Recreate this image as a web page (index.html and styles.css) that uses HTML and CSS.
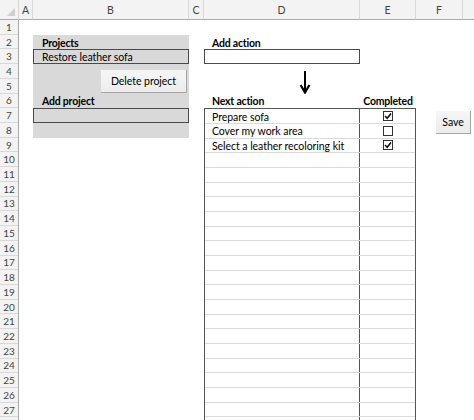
FILE: index.html
```html
<!DOCTYPE html>
<html>
<head>
<meta charset="utf-8">
<link rel="stylesheet" href="styles.css">
</head>
<body>
<div class="sheet">
  <div class="corner"><span class="tri"></span></div>
  <div class="ch">A</div>
  <div class="ch">B</div>
  <div class="ch">C</div>
  <div class="ch">D</div>
  <div class="ch">E</div>
  <div class="ch">F</div>
  <div class="ch ch-last"></div>

  <div class="rowhdrs">
    <div class="rh">1</div><div class="rh">2</div><div class="rh">3</div><div class="rh">4</div>
    <div class="rh">5</div><div class="rh">6</div><div class="rh">7</div><div class="rh">8</div>
    <div class="rh">9</div><div class="rh">10</div><div class="rh">11</div><div class="rh">12</div>
    <div class="rh">13</div><div class="rh">14</div><div class="rh">15</div><div class="rh">16</div>
    <div class="rh">17</div><div class="rh">18</div><div class="rh">19</div><div class="rh">20</div>
    <div class="rh">21</div><div class="rh">22</div><div class="rh">23</div><div class="rh">24</div>
    <div class="rh">25</div><div class="rh">26</div><div class="rh">27</div><div class="rh"></div>
  </div>

  <div class="block"></div>
  <div class="label lbl-projects">Projects</div>
  <div class="field field-gray fld-project">Restore leather sofa</div>
  <div class="btn btn-delete">Delete project</div>
  <div class="label lbl-addproject">Add project</div>
  <div class="field field-gray fld-addproject"></div>

  <div class="label lbl-addaction">Add action</div>
  <div class="field field-white fld-addaction"></div>
  <svg class="arrow" width="12" height="23" viewBox="0 0 12 23">
    <path d="M6 0 V21" stroke="#000" stroke-width="2" fill="none"/>
    <path d="M1.6 14 L6 21.5 L10.4 14" stroke="#000" stroke-width="2.2" fill="none"/>
  </svg>

  <div class="label lbl-next">Next action</div>
  <div class="label lbl-completed">Completed</div>

  <div class="tbl">
    <div class="tr"><div class="td">Prepare sofa</div><div class="tc"><span class="cb"><svg width="8" height="8" viewBox="0 0 8 8"><path d="M1 4 L3.2 6.2 L7 1.6" stroke="#111" stroke-width="1.6" fill="none"/></svg></span></div></div>
    <div class="tr"><div class="td">Cover my work area</div><div class="tc"><span class="cb"></span></div></div>
    <div class="tr"><div class="td">Select a leather recoloring kit</div><div class="tc"><span class="cb"><svg width="8" height="8" viewBox="0 0 8 8"><path d="M1 4 L3.2 6.2 L7 1.6" stroke="#111" stroke-width="1.6" fill="none"/></svg></span></div></div>
    <div class="tr"><div class="td"></div><div class="tc"></div></div>
    <div class="tr"><div class="td"></div><div class="tc"></div></div>
    <div class="tr"><div class="td"></div><div class="tc"></div></div>
    <div class="tr"><div class="td"></div><div class="tc"></div></div>
    <div class="tr"><div class="td"></div><div class="tc"></div></div>
    <div class="tr"><div class="td"></div><div class="tc"></div></div>
    <div class="tr"><div class="td"></div><div class="tc"></div></div>
    <div class="tr"><div class="td"></div><div class="tc"></div></div>
    <div class="tr"><div class="td"></div><div class="tc"></div></div>
    <div class="tr"><div class="td"></div><div class="tc"></div></div>
    <div class="tr"><div class="td"></div><div class="tc"></div></div>
    <div class="tr"><div class="td"></div><div class="tc"></div></div>
    <div class="tr"><div class="td"></div><div class="tc"></div></div>
    <div class="tr"><div class="td"></div><div class="tc"></div></div>
    <div class="tr"><div class="td"></div><div class="tc"></div></div>
    <div class="tr"><div class="td"></div><div class="tc"></div></div>
    <div class="tr"><div class="td"></div><div class="tc"></div></div>
    <div class="tr"><div class="td"></div><div class="tc"></div></div>
    <div class="tr"><div class="td"></div><div class="tc"></div></div>
  </div>

  <div class="btn btn-save">Save</div>
</div>
</body>
</html>
```

FILE: styles.css
```css
html, body {
  margin: 0;
  padding: 0;
  background: #fff;
  overflow: hidden;
}
body {
  width: 474px;
  height: 420px;
  font-family: "Lato", "Liberation Sans", sans-serif;
  font-size: 10.5px;
  letter-spacing: -0.05px;
  color: #000;
}
.sheet {
  display: grid;
  grid-template-columns: 19px 14px 156px 15px 156px 56px 47px 1fr;
  grid-template-rows: 20px repeat(28, 14.72px);
  width: 474px;
  height: 432px;
}
/* headers */
.corner {
  background: #f3f3f3;
  border-right: 1px solid #d6d6d6;
  border-bottom: 1px solid #ababab;
  position: relative;
}
.tri {
  position: absolute;
  right: 3px;
  bottom: 3px;
  width: 0;
  height: 0;
  border-left: 8px solid transparent;
  border-bottom: 8px solid #d0d0d0;
}
.ch {
  background: #f3f3f3;
  border-right: 1px solid #d9d9d9;
  border-bottom: 1px solid #ababab;
  display: flex;
  align-items: center;
  justify-content: center;
  font-size: 10.5px;
  letter-spacing: 0;
  color: #444;
  padding-top: 1px;
}
.ch-last { border-right: none; }
.rowhdrs {
  grid-column: 1;
  grid-row: 2 / span 28;
  display: grid;
  grid-template-rows: repeat(28, 14.72px);
  background: #f3f3f3;
  border-right: 1px solid #ababab;
}
.rh {
  border-bottom: 1px solid #d9d9d9;
  display: flex;
  align-items: center;
  justify-content: center;
  font-size: 10px;
  letter-spacing: 0;
  color: #444;
}
/* gray block in column B */
.block {
  grid-column: 3;
  grid-row: 3 / span 7;
  background: #d9d9d9;
}
.label {
  font-weight: bold;
  letter-spacing: -0.2px;
  padding-left: 9px;
  display: flex;
  align-items: center;
  padding-top: 1px;
  white-space: nowrap;
}
.lbl-projects { grid-column: 3; grid-row: 3; }
.lbl-addproject { grid-column: 3; grid-row: 7; }
.lbl-addaction { grid-column: 5; grid-row: 3; padding-left: 8px; }
.lbl-next { grid-column: 5; grid-row: 7; padding-left: 8px; }
.lbl-completed { grid-column: 6; grid-row: 7; justify-content: center; padding-left: 0; }

.field {
  box-sizing: border-box;
  border: 1px solid #4a4a4a;
  border-right-width: 1.5px;
  border-bottom-width: 1.5px;
  display: flex;
  align-items: center;
  padding-left: 8px;
  white-space: nowrap;
}
.field-gray { background: #d9d9d9; }
.field-white { background: #fff; }
.fld-project { grid-column: 3; grid-row: 4; }
.fld-addproject { grid-column: 3; grid-row: 8; }
.fld-addaction { grid-column: 5; grid-row: 4; }

.btn {
  box-sizing: border-box;
  background: linear-gradient(#f6f6f6, #ececec);
  border-right: 1.5px solid #a6a6a6;
  border-bottom: 1.5px solid #a6a6a6;
  display: flex;
  align-items: center;
  justify-content: center;
  white-space: nowrap;
}
.btn-delete {
  grid-column: 3;
  grid-row: 5 / span 2;
  justify-self: end;
  align-self: end;
  width: 86px;
  height: 23px;
  margin-right: 2px;
  margin-bottom: 0.5px;
}
.btn-save {
  grid-column: 7 / span 2;
  grid-row: 8 / span 2;
  justify-self: start;
  align-self: start;
  width: 35px;
  height: 23px;
  margin-left: 20px;
  margin-top: 2.5px;
}
.arrow {
  grid-column: 5;
  grid-row: 5 / span 2;
  margin-left: 95px;
  margin-top: 7px;
}

/* table D7:E28 */
.tbl {
  grid-column: 5 / span 2;
  grid-row: 8 / span 22;
  box-sizing: border-box;
  border: 1.5px solid #555;
  border-bottom: none;
  display: grid;
  grid-template-rows: repeat(22, 1fr);
}
.tr {
  display: grid;
  grid-template-columns: 1fr 56px;
  border-bottom: 1px solid #dadada;
}
.td {
  padding-left: 7px;
  padding-top: 1px;
  display: flex;
  align-items: center;
  white-space: nowrap;
}
.tc {
  border-left: 1.5px solid #555;
  display: flex;
  align-items: center;
  justify-content: center;
}
.cb {
  box-sizing: border-box;
  width: 10px;
  height: 10px;
  border: 1px solid #333;
  background: #fff;
  display: flex;
  align-items: center;
  justify-content: center;
}
```
